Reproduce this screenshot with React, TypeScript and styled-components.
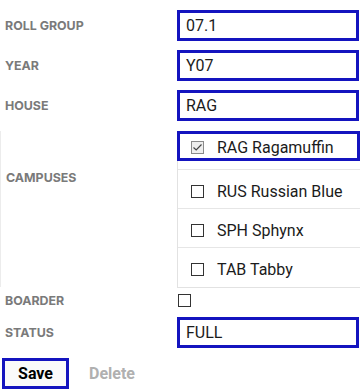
import React from "react";
import styled, { createGlobalStyle } from "styled-components";

const Global = createGlobalStyle`
  html, body { margin: 0; padding: 0; background: #fff; }
  body { font-family: Roboto, "Liberation Sans", sans-serif; }
`;

const BLUE = "#1414bf";

const Form = styled.div`
  width: 360px;
  display: grid;
  grid-template-columns: 177px 1fr;
  padding-top: 5px;
`;

const Label = styled.div<{ $h: number; $bordered?: boolean }>`
  height: ${(p) => p.$h}px;
  display: flex;
  align-items: center;
  padding-left: 5px;
  font-family: Inter, Roboto, sans-serif;
  font-weight: 700;
  font-size: 12.4px;
  color: #7a7a7a;
  box-sizing: border-box;
  ${(p) =>
    p.$bordered
      ? `border-left: 1px solid #ececec; margin-top: 6px; height: ${p.$h - 8}px; align-items: flex-start; padding-top: 39px;`
      : ""}
`;

const Cell = styled.div<{ $h: number }>`
  height: ${(p) => p.$h}px;
  display: flex;
  align-items: center;
  box-sizing: border-box;
`;

const Input = styled.div`
  width: 182px;
  height: 31px;
  box-sizing: border-box;
  border: 3px solid ${BLUE};
  padding-left: 6px;
  display: flex;
  align-items: center;
  font-size: 16px;
  color: #1b1b1b;
`;

const List = styled.div`
  margin-top: 6px;
  align-self: flex-start;
  width: 183px;
  border-left: 1px solid #e2e2e2;
  border-bottom: 1px solid #e2e2e2;
  box-sizing: border-box;
`;

const Item = styled.div<{ $first?: boolean; $last?: boolean }>`
  height: 39px;
  box-sizing: border-box;
  padding-top: ${(p) => (p.$first ? 0 : 5)}px;
  border-bottom: ${(p) => (p.$last ? "none" : "1px solid #e6e6e6")};
`;

const Option = styled.div<{ $focus?: boolean }>`
  height: 30px;
  margin-left: -1px;
  box-sizing: border-box;
  border: 3px solid ${(p) => (p.$focus ? BLUE : "transparent")};
  display: flex;
  align-items: center;
  gap: 13px;
  padding-left: 11px;
  padding-top: 3px;
  font-size: 16px;
  color: #1b1b1b;
`;

const Box = styled.span<{ $checked?: boolean; $inline?: boolean }>`
  width: 13px;
  height: 13px;
  box-sizing: border-box;
  border: 1px solid ${(p) => (p.$checked ? "#8a8a8a" : "#333")};
  background: ${(p) => (p.$checked ? "#eeeeee" : "#fff")};
  display: inline-flex;
  align-items: center;
  justify-content: center;
  flex: none;
  margin-left: ${(p) => (p.$inline ? 1 : 0)}px;
`;

const Buttons = styled.div`
  display: flex;
  align-items: center;
  gap: 20px;
  padding: 5px 0 0 2px;
`;

const SaveButton = styled.button`
  width: 67px;
  height: 31px;
  border: 3px solid ${BLUE};
  background: #fafafa;
  font-family: Roboto, sans-serif;
  font-weight: 700;
  font-size: 16px;
  color: #000;
  padding: 0;
`;

const DeleteButton = styled.button`
  border: none;
  background: none;
  font-family: Roboto, sans-serif;
  font-weight: 700;
  font-size: 16px;
  color: #b0b0b0;
  padding: 0;
`;

const Check = () => (
  <svg width="11" height="11" viewBox="0 0 11 11">
    <path d="M1.5 5.5 L4.2 8 L9.5 2.5" fill="none" stroke="#444" strokeWidth="1.2" />
  </svg>
);

const campuses = [
  { code: "RAG", name: "Ragamuffin", checked: true },
  { code: "RUS", name: "Russian Blue" },
  { code: "SPH", name: "Sphynx" },
  { code: "TAB", name: "Tabby" },
];

export default function App() {
  return (
    <>
      <Global />
      <Form>
        <Label $h={40}>ROLL GROUP</Label>
        <Cell $h={40}>
          <Input>07.1</Input>
        </Cell>
        <Label $h={41}>YEAR</Label>
        <Cell $h={41}>
          <Input>Y07</Input>
        </Cell>
        <Label $h={39}>HOUSE</Label>
        <Cell $h={39}>
          <Input>RAG</Input>
        </Cell>
        <Label $h={164} $bordered>
          CAMPUSES
        </Label>
        <Cell $h={164}>
          <List>
            {campuses.map((c, i) => (
              <Item key={c.code} $first={i === 0} $last={i === campuses.length - 1}>
                <Option $focus={c.checked}>
                  <Box $checked={c.checked}>{c.checked && <Check />}</Box>
                  {c.code} {c.name}
                </Option>
              </Item>
            ))}
          </List>
        </Cell>
        <Label $h={22}>BOARDER</Label>
        <Cell $h={22}>
          <Box $inline />
        </Cell>
        <Label $h={42}>STATUS</Label>
        <Cell $h={42}>
          <Input>FULL</Input>
        </Cell>
      </Form>
      <Buttons>
        <SaveButton>Save</SaveButton>
        <DeleteButton>Delete</DeleteButton>
      </Buttons>
    </>
  );
}
